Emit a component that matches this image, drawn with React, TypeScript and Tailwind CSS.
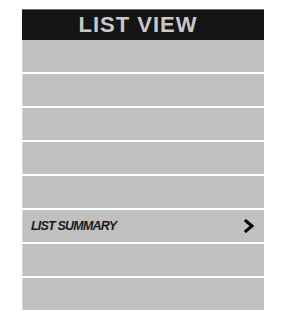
export default function App() {
  const rows = [0, 1, 2, 3, 4, 5, 6, 7];
  return (
    <div className="w-[286px] h-[315px] bg-white pt-[9px] pl-[22px]" style={{ fontFamily: '"Liberation Sans", Arial, sans-serif' }}>
      <div className="w-[242px] flex flex-col">
        <div className="h-[31px] bg-[#141414] border-t border-[#6b6b6b] flex items-center justify-center pr-[10px]">
          <span className="text-[22px] font-bold tracking-[1px] text-[#c8c8c8] leading-none">LIST VIEW</span>
        </div>
        <div className="flex flex-col gap-[2px]">
          {rows.map((i) =>
            i === 5 ? (
              <div key={i} className="h-[32px] bg-[#c0c0c0] border-l border-[#d6d6d6] flex items-center justify-between pl-[8px] pr-[9px]">
                <span className="text-[12.5px] font-bold italic tracking-[-0.8px] text-[#1a1a1a]">LIST SUMMARY</span>
                <svg width="12" height="14" viewBox="0 0 12 14">
                  <polyline points="3,2 9,7 3,12" fill="none" stroke="#000" strokeWidth="3" strokeLinecap="square" />
                </svg>
              </div>
            ) : (
              <div key={i} className="h-[32px] bg-[#c0c0c0] border-l border-[#d6d6d6]" />
            )
          )}
        </div>
      </div>
    </div>
  );
}
